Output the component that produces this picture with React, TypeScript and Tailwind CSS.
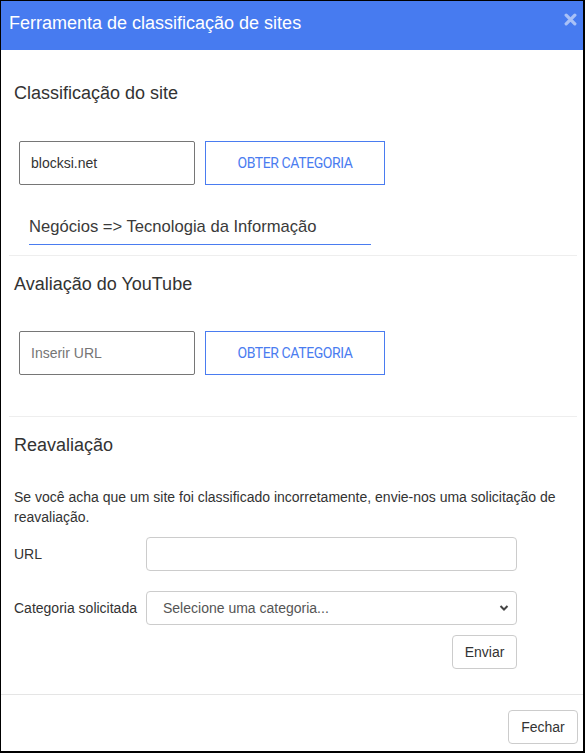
import React from "react";

const sans = { fontFamily: '"Liberation Sans", Arial, sans-serif' };

function Sep() {
  return <div className="h-px bg-[#eeeeee] w-[568px]" />;
}

function FetchRow({ value, placeholder }: { value?: string; placeholder?: string }) {
  return (
    <div className="flex gap-[10px] pl-[10px]">
      <div className="w-[176px] h-[44px] border border-[#767676] rounded-[2px] flex items-center pl-[11px] text-[14px]">
        {value ? (
          <span className="text-[#333333]">{value}</span>
        ) : (
          <span className="text-[#757575]">{placeholder}</span>
        )}
      </div>
      <div
        className="w-[180px] h-[44px] border border-[#4a7cf0] flex items-center justify-center text-[14px] text-[#4a7cf0] tracking-[-0.4px]"
        style={{ fontFamily: 'Roboto, "Liberation Sans", sans-serif' }}
      >
        OBTER CATEGORIA
      </div>
    </div>
  );
}

export default function App() {
  return (
    <div
      className="w-[585px] h-[753px] bg-white border-l border-t border-r-2 border-b-2 border-black flex flex-col overflow-hidden"
      style={sans}
    >
      {/* Header */}
      <div className="h-[49px] bg-[#477bf0] flex items-start justify-between pl-[8px] pr-[6px] shrink-0">
        <div className="pt-[10px] text-[18px] leading-[24px] text-white">
          Ferramenta de classificação de sites
        </div>
        <svg width="13" height="13" viewBox="0 0 12 12" className="mt-[12px]">
          <path d="M2 2 L10 10 M10 2 L2 10" stroke="#a9c1f7" strokeWidth="3" strokeLinecap="round" />
        </svg>
      </div>

      {/* Body */}
      <div className="pl-[8px] flex flex-col">
        <div className="mt-[31px] pl-[5px] text-[18px] leading-[24px] text-[#333333]">Classificação do site</div>
        <div className="mt-[36px]">
          <FetchRow value="blocksi.net" />
        </div>
        <div className="mt-[30px] ml-[20px] w-[342px] pb-[5px] border-b border-[#4a7cf0] text-[16.6px] leading-[24px] text-[#3a3a3a]">
          Negócios =&gt; Tecnologia da Informação
        </div>
        <div className="mt-[10px]">
          <Sep />
        </div>

        <div className="mt-[16px] pl-[5px] text-[18px] leading-[24px] text-[#333333]">Avaliação do YouTube</div>
        <div className="mt-[35px]">
          <FetchRow placeholder="Inserir URL" />
        </div>
        <div className="mt-[41px]">
          <Sep />
        </div>

        <div className="mt-[16px] pl-[5px] text-[18px] leading-[24px] text-[#333333]">Reavaliação</div>
        <p className="mt-[30px] pl-[5px] pr-[6px] text-[14px] leading-[20px] text-[#333333]">
          Se você acha que um site foi classificado incorretamente, envie-nos uma solicitação de reavaliação.
        </p>

        <div className="mt-[10px] pl-[5px] flex items-center">
          <div className="w-[132px] text-[14px] text-[#333333]">URL</div>
          <div className="w-[371px] h-[34px] border border-[#cccccc] rounded-[4px]" />
        </div>
        <div className="mt-[20px] pl-[5px] flex items-center">
          <div className="w-[132px] text-[14px] text-[#333333]">Categoria solicitada</div>
          <div className="w-[371px] h-[34px] border border-[#cccccc] rounded-[4px] flex items-center justify-between pl-[16px] pr-[7px]">
            <span className="text-[14px] text-[#555555]">Selecione uma categoria...</span>
            <svg width="10" height="8" viewBox="0 0 10 8">
              <path d="M1.5 2 L5 5.5 L8.5 2" stroke="#444444" strokeWidth="2" fill="none" />
            </svg>
          </div>
        </div>
        <div className="mt-[10px] w-[508px] flex justify-end">
          <div className="w-[65px] h-[34px] border border-[#cccccc] rounded-[4px] flex items-center justify-center text-[14px] text-[#333333]">
            Enviar
          </div>
        </div>
      </div>

      {/* Footer */}
      <div className="mt-[25px] h-px bg-[#e5e5e5]" />
      <div className="mt-[15px] flex justify-end pr-[5px]">
        <div className="w-[70px] h-[34px] border border-[#cccccc] rounded-[4px] flex items-center justify-center text-[14px] text-[#333333]">
          Fechar
        </div>
      </div>
    </div>
  );
}
